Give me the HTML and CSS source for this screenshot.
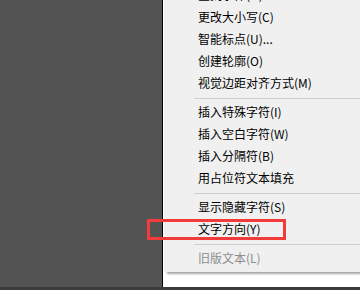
FILE: index.html
```html
<!DOCTYPE html>
<html>
<head>
<meta charset="utf-8">
<link rel="stylesheet" href="styles.css">
</head>
<body>
<div class="screen">
  <div class="main">
    <div class="side"></div>
    <div class="divider"></div>
    <div class="canvas">
      <div class="menu">
        <div class="item">查找字体(N)...</div>
        <div class="item">更改大小写(C)</div>
        <div class="item">智能标点(U)...</div>
        <div class="item">创建轮廓(O)</div>
        <div class="item">视觉边距对齐方式(M)</div>
        <div class="sep"></div>
        <div class="item">插入特殊字符(I)</div>
        <div class="item">插入空白字符(W)</div>
        <div class="item">插入分隔符(B)</div>
        <div class="item">用占位符文本填充</div>
        <div class="sep"></div>
        <div class="item">显示隐藏字符(S)</div>
        <div class="item">文字方向(Y)</div>
        <div class="sep"></div>
        <div class="item disabled">旧版文本(L)</div>
      </div>
    </div>
  </div>
  <div class="bottom"></div>
  <div class="highlight"></div>
</div>
</body>
</html>
```
FILE: styles.css
```css
html, body {
  margin: 0;
  padding: 0;
}
.screen {
  position: relative;
  width: 360px;
  height: 290px;
  overflow: hidden;
  display: flex;
  flex-direction: column;
  font-family: "Noto Sans CJK SC", "Noto Sans", sans-serif;
  font-size: 12px;
}
.main {
  flex: 1;
  display: flex;
  min-height: 0;
}
.side {
  width: 162px;
  background: #535353;
}
.divider {
  width: 1px;
  background: #000;
}
.canvas {
  flex: 1;
  background: #fff;
  padding-left: 1px;
  overflow: hidden;
}
.menu {
  margin-top: -16px;
  padding-bottom: 3px;
  background: #f0f0f0;
  box-shadow: 3px 2px 2px rgba(0, 0, 0, 0.35);
}
.item {
  height: 22px;
  line-height: 22px;
  padding-left: 34px;
  color: #000;
  white-space: nowrap;
}
.item.disabled {
  color: #8d8d8d;
}
.sep {
  height: 1px;
  margin: 4px 0 2px 30px;
  background: #cfcfcf;
}
.bottom {
  height: 3px;
  background: #3a3a3a;
}
.highlight {
  position: absolute;
  left: 147px;
  top: 219px;
  width: 133px;
  height: 15px;
  border: 3px solid #f23b3b;
}
```
